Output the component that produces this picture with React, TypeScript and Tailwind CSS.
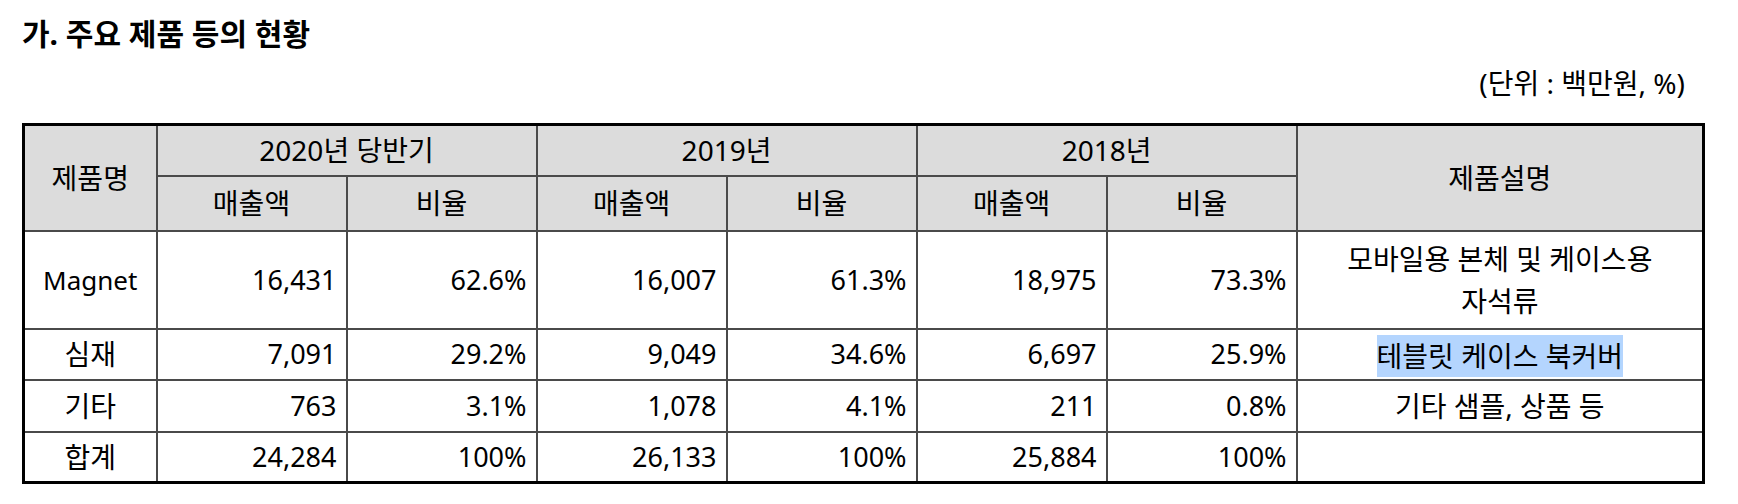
import React from "react";

const font = { fontFamily: '"Noto Sans", "Noto Sans CJK KR", sans-serif' };

const rows = [
  { name: "Magnet", v: ["16,431", "62.6%", "16,007", "61.3%", "18,975", "73.3%"], desc: "magnet", h: "h-[98px]" },
  { name: "심재", v: ["7,091", "29.2%", "9,049", "34.6%", "6,697", "25.9%"], desc: "core", h: "h-[51px]" },
  { name: "기타", v: ["763", "3.1%", "1,078", "4.1%", "211", "0.8%"], desc: "etc", h: "h-[52px]" },
  { name: "합계", v: ["24,284", "100%", "26,133", "100%", "25,884", "100%"], desc: "", h: "h-[51px]" },
];

export default function App() {
  const th = "border-2 border-[#4a4a4a] bg-[#dcdcdc] font-normal text-center text-[28px]";
  const td = "border-2 border-[#4a4a4a] text-right pr-[9px] text-[27px]";
  return (
    <div className="w-[1738px] h-[504px] bg-white text-black overflow-hidden" style={font}>
      <div className="pl-[22px] pt-[14px]">
        <h1 className="text-[30px] leading-[40px] font-bold">가. 주요 제품 등의 현황</h1>
      </div>
      <div className="flex justify-end pr-[53px] mt-[13px]">
        <span className="text-[28px] leading-[32px]">(단위 : 백만원, %)</span>
      </div>
      <div className="pl-[22px] mt-[24px]">
        <table className="table-fixed border-collapse border-[3px] border-black w-[1680px] text-[28px] leading-[40px]">
          <colgroup>
            <col className="w-[133px]" />
            <col className="w-[190px]" />
            <col className="w-[190px]" />
            <col className="w-[190px]" />
            <col className="w-[190px]" />
            <col className="w-[190px]" />
            <col className="w-[190px]" />
            <col className="w-[407px]" />
          </colgroup>
          <thead>
            <tr className="h-[51px]">
              <th rowSpan={2} className={th}>제품명</th>
              <th colSpan={2} className={th}>2020년 당반기</th>
              <th colSpan={2} className={th}>2019년</th>
              <th colSpan={2} className={th}>2018년</th>
              <th rowSpan={2} className={th}>제품설명</th>
            </tr>
            <tr className="h-[55px]">
              <th className={th}>매출액</th>
              <th className={th}>비율</th>
              <th className={th}>매출액</th>
              <th className={th}>비율</th>
              <th className={th}>매출액</th>
              <th className={th}>비율</th>
            </tr>
          </thead>
          <tbody>
            {rows.map((r) => (
              <tr key={r.name} className={r.h}>
                <td className={`border-2 border-[#4a4a4a] text-center ${r.name === "Magnet" ? "text-[26px]" : "text-[28px]"}`}>{r.name}</td>
                {r.v.map((x, i) => (
                  <td key={i} className={td}>{x}</td>
                ))}
                <td className="border-2 border-[#4a4a4a] text-center leading-[42px] text-[28px]">
                  {r.desc === "magnet" && (
                    <>
                      모바일용 본체 및 케이스용
                      <br />
                      자석류
                    </>
                  )}
                  {r.desc === "core" && (
                    <span className="inline-block bg-[#b4d5fe] leading-[42px] align-middle">테블릿 케이스 북커버</span>
                  )}
                  {r.desc === "etc" && "기타 샘플, 상품 등"}
                </td>
              </tr>
            ))}
          </tbody>
        </table>
      </div>
    </div>
  );
}
